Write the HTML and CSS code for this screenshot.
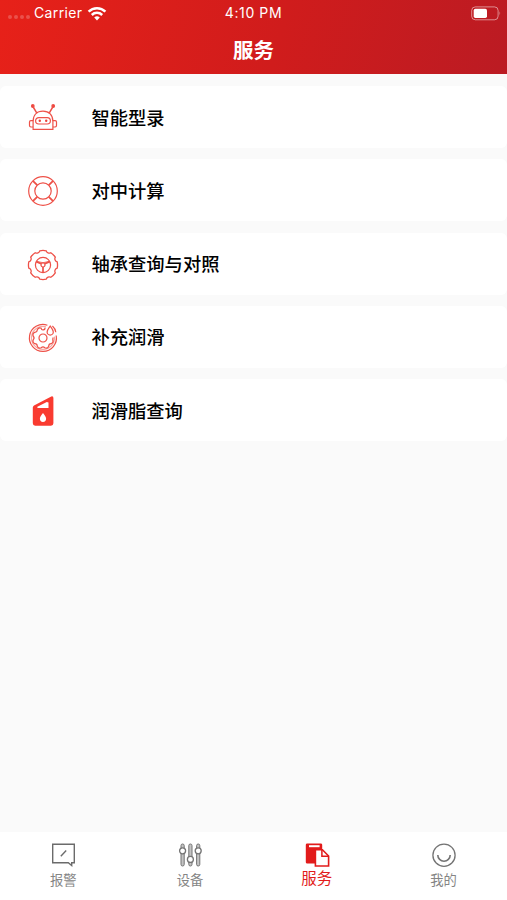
FILE: index.html
```html
<!DOCTYPE html>
<html lang="zh-CN">
<head>
<meta charset="utf-8">
<title>服务</title>
<link rel="stylesheet" href="styles.css">
</head>
<body>
<div class="app">
  <header class="header">
    <div class="status">
      <div class="status-left">
        <span class="signal"><i></i><i></i><i></i><i></i></span>
        <span class="carrier">Carrier</span>
        <svg class="wifi" width="20" height="15" viewBox="0 0 20 15" fill="none" stroke="#fff" stroke-width="2.5">
          <path d="M1.6 5.7a12 12 0 0 1 16.8 0"/>
          <path d="M4.8 9a7.4 7.4 0 0 1 10.4 0"/>
          <path d="M10 14.4 7.2 11.6a4 4 0 0 1 5.6 0z" fill="#fff" stroke="none"/>
        </svg>
      </div>
      <span class="time">4:10 PM</span>
      <svg class="battery" width="31" height="15" viewBox="0 0 31 15">
        <rect x=".7" y=".9" width="26.4" height="12.9" rx="3.6" fill="none" stroke="#fff" stroke-opacity=".5"/>
        <rect x="2.7" y="2.8" width="13.3" height="9.1" rx="1.7" fill="#fff"/>
        <path d="M28.5 5.2q1.8 2.2 0 4.4z" fill="#fff" fill-opacity=".5"/>
      </svg>
    </div>
    <h1 class="title">服务</h1>
  </header>

  <main class="list">
    <a class="row">
      <svg class="icon" viewBox="-16 -16 32 32">
        <path d="M-9.8-11-6.3-5.2M9.8-11 6.3-5.2" stroke-width="1.5"/>
        <circle class="solid" cx="-10.2" cy="-12" r="1.3"/><circle class="solid" cx="10.2" cy="-12" r="1.3"/>
        <path d="M-9.9 11.4V3.4C-9.9-3-6-6.8 0-6.8S9.9-3 9.9 3.4v8z"/>
        <path d="M-9.9 2.6h-2.2q-1.4 0-1.4 1.4v3.6q0 1.4 1.4 1.4h2.2M9.9 2.6h2.2q1.4 0 1.4 1.4v3.6q0 1.4-1.4 1.4H9.9"/>
        <rect x="-7.4" y="-.4" width="14.8" height="6.4" rx="3.2"/>
        <circle class="solid dot" cx="-3.2" cy="2.8" r="1.2"/><circle class="solid dot" cx="3.2" cy="2.8" r="1.2"/>
      </svg>
      <span>智能型录</span>
    </a>
    <a class="row">
      <svg class="icon" viewBox="-16 -16 32 32">
        <circle r="14.3"/><circle r="8.2"/>
        <path d="M-10.1-10.1-5.8-5.8M10.1-10.1 5.8-5.8M-10.1 10.1-5.8 5.8M10.1 10.1 5.8 5.8" stroke-width="1.8"/>
      </svg>
      <span>对中计算</span>
    </a>
    <a class="row">
      <svg class="icon" viewBox="-16 -16 32 32">
        <path stroke-width="1.3" d="M14.2-3.2Q14.9 0 14.2 3.2A3.1 3.1 0 0 0 12.3 7.8Q10.5 10.5 7.8 12.3A3.1 3.1 0 0 0 3.2 14.2Q0 14.9-3.2 14.2A3.1 3.1 0 0 0-7.8 12.3Q-10.5 10.5-12.3 7.8A3.1 3.1 0 0 0-14.2 3.2Q-14.9 0-14.2-3.2A3.1 3.1 0 0 0-12.3-7.8Q-10.5-10.5-7.8-12.3A3.1 3.1 0 0 0-3.2-14.2Q0-14.9 3.2-14.2A3.1 3.1 0 0 0 7.8-12.3Q10.5-10.5 12.3-7.8A3.1 3.1 0 0 0 14.2-3.2z"/>
        <circle r="7.6"/><circle r="2"/>
        <path d="M-6.8-3.4-1.8-1.2M6.8-3.4 1.8-1.2M0 2v5.6" stroke-width="1.7"/>
        <path d="M-6.5-3.6Q0-1 6.5-3.6" stroke-width=".9"/>
      </svg>
      <span>轴承查询与对照</span>
    </a>
    <a class="row">
      <svg class="icon" viewBox="-16 -16 32 32">
        <path d="M4.4-12.8A13.5 13.5 0 1 0 13.2-2.5"/>
        <path d="M3-11.2A11.5 11.5 0 1 0 11.4-1.4" stroke-opacity=".5"/>
        <path d="M2-10.2A1.8 1.8 0 0 1-1.8-9.8A3 3 0 0 0-5.7-8.2A2.6 2.6 0 0 1-8.2-5.7A3 3 0 0 0-9.8-1.8A2.6 2.6 0 0 1-9.8 1.8A3 3 0 0 0-8.2 5.7A2.6 2.6 0 0 1-5.7 8.2A3 3 0 0 0-1.8 9.8A2.6 2.6 0 0 1 1.8 9.8A3 3 0 0 0 5.7 8.2A2.6 2.6 0 0 1 8.2 5.7A3 3 0 0 0 9.8 1.8L10-.5"/>
        <circle r="4"/>
        <path d="M7.2-12C9-9.4 10.3-7.8 10.3-6a3.1 3.1 0 0 1-6.2 0C4.1-7.8 5.4-9.4 7.2-12z"/>
        <path d="M9.4-12Q12.4-9.4 12.8-5.8"/>
      </svg>
      <span>补充润滑</span>
    </a>
    <a class="row">
      <svg class="icon" viewBox="-16 -16 32 32">
        <path class="solid can" fill-rule="evenodd" d="M8.3-14.6Q10.4-15.2 10.4-12.9V12.3Q10.4 14.7 8 14.7H-7.8Q-10.2 14.7-10.2 12.3V-3.4Q-10.2-4.8-9-5.6zM-5.6-3H5.5V-8.6L3.8-9-5.6-4.2zM0 2C-2 4.8-3.1 5.9-3.1 7.8a3.1 3.1 0 0 0 6.2 0C3.1 5.9 2 4.8 0 2z"/>
      </svg>
      <span>润滑脂查询</span>
    </a>
  </main>

  <nav class="tabs">
    <a class="tab">
      <svg width="26" height="26" viewBox="0 0 26 26" fill="none" stroke="#6b6b6b" stroke-width="1.4">
        <path d="M2.7 2.2h21.6v18.6h-2.6v2.8l-3.4-2.8H2.7z"/><path d="m10.8 14.3 5.4-5.7"/>
      </svg>
      <span>报警</span>
    </a>
    <a class="tab">
      <svg width="26" height="26" viewBox="0 0 26 26" fill="#c4c4c4" stroke="#747474" stroke-width="1">
        <rect x="4" y="2" width="3.2" height="22" rx="1.6"/><rect x="11.8" y="2" width="3.2" height="22" rx="1.6"/><rect x="19.6" y="2" width="3.2" height="22" rx="1.6"/>
        <g fill="#fff" stroke-width="1.3"><circle cx="5.6" cy="8.8" r="3"/><circle cx="13.4" cy="17.4" r="3"/><circle cx="21.2" cy="8.8" r="3"/></g>
      </svg>
      <span>设备</span>
    </a>
    <a class="tab active">
      <svg width="26" height="26" viewBox="0 0 26 26">
        <path fill="#e21b1b" d="M3.2 1.4h13.6q1.4 0 1.4 1.4v4.1H11v14.7H3.2q-1.4 0-1.4-1.4V2.8q0-1.4 1.4-1.4z"/>
        <path d="M5 4.2h10.6" stroke="#fff" stroke-width="2"/>
        <path d="M11.4 7.8h7l6.2 6.2v10H11.4z" fill="#fff" stroke="#e21b1b" stroke-width="1.6"/>
        <path d="M17.9 7.8v6.5h6.6" fill="none" stroke="#e21b1b" stroke-width="1.5"/>
      </svg>
      <span>服务</span>
    </a>
    <a class="tab">
      <svg width="26" height="26" viewBox="0 0 26 26" fill="none" stroke="#747474" stroke-width="1.3">
        <circle cx="13" cy="13.2" r="11.1"/><path d="M6.8 13a6.2 6.2 0 0 0 12.4 0" stroke-width="1.6"/>
      </svg>
      <span>我的</span>
    </a>
  </nav>
</div>
</body>
</html>
```

FILE: styles.css
```css
* { box-sizing: border-box; }

body {
  margin: 0;
  font-family: Inter, "Noto Sans CJK SC", sans-serif;
  color: #000;
  background: #fafafa;
}

.app {
  display: flex;
  flex-direction: column;
  height: 900px;
}

.header {
  height: 74px;
  color: #fff;
  background: linear-gradient(105deg, #e72119 0%, #d01c1c 55%, #bb1b23 100%);
}

.status {
  display: grid;
  grid-template-columns: 1fr auto 1fr;
  align-items: center;
  height: 26px;
  padding: 0 5px 0 8px;
  font-size: 14px;
  line-height: 26px;
}

.status-left {
  display: flex;
  align-items: center;
}

.signal {
  display: flex;
  gap: 2px;
  width: 26px;
  padding-top: 8px;
}

.signal i {
  width: 4px;
  height: 4px;
  border-radius: 50%;
  background: rgba(255, 255, 255, .22);
}

.carrier { letter-spacing: .35px; }
.wifi { margin-left: 5px; }

.time {
  margin-right: 3px;
  letter-spacing: .6px;
}

.battery { justify-self: end; }

.title {
  margin: 0;
  padding-top: 10px;
  font-size: 20.5px;
  line-height: 30px;
  font-weight: 700;
  text-align: center;
}

.list {
  display: flex;
  flex: 1;
  flex-direction: column;
  gap: 11.3px;
  padding-top: 12px;
}

.row {
  display: flex;
  align-items: center;
  height: 62px;
  padding-left: 27px;
  background: #fff;
  border-radius: 6px;
  font-size: 18.3px;
  line-height: 28px;
  font-weight: 500;
}

.row span { padding-top: 1px; }

.icon {
  width: 32px;
  height: 32px;
  margin: 2px 32.5px 0 0;
  fill: none;
  stroke: #ee5148;
  stroke-width: 1.2;
}

.icon .solid { fill: #ee4038; }
.icon .dot { stroke: none; }
.icon .can { fill: #f93b30; stroke: none; }

.tabs {
  display: grid;
  grid-template-columns: repeat(4, 1fr);
  height: 68px;
  background: #fff;
}

.tab {
  display: flex;
  flex-direction: column;
  align-items: center;
  padding-top: 10px;
  font-size: 13.3px;
  line-height: 20px;
  color: #858585;
}

.tab span { margin-top: 2px; }

.active {
  font-size: 15.5px;
  color: #e21b1b;
}

.active span { margin-top: 1px; }
```
